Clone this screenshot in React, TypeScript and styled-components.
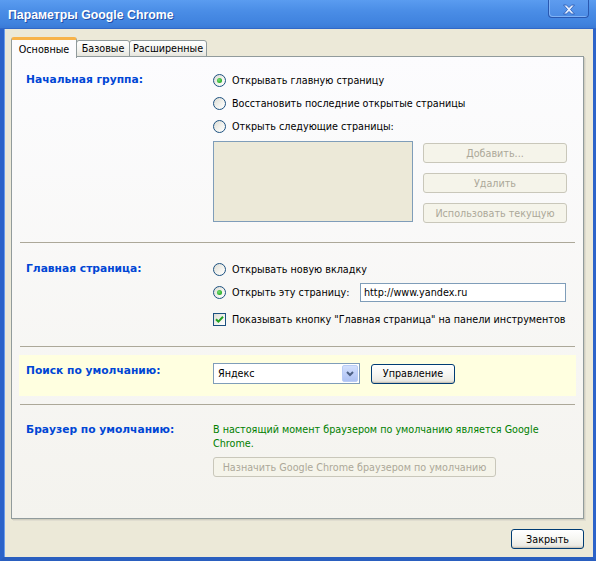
import React from "react"
import styled, { createGlobalStyle } from "styled-components"

const GlobalStyle = createGlobalStyle`
  html, body {
    margin: 0;
    padding: 0;
    background: #ffffff;
  }
  body {
    font-family: "DejaVu Sans Condensed", "Liberation Sans", sans-serif;
    font-size: 10.7px;
    color: #000;
  }
`

const Window = styled.div`
  width: 596px;
  height: 561px;
  box-sizing: border-box;
  display: flex;
  flex-direction: column;
  background: #ece9d8;
  border-left: 4px solid #2c63c9;
  border-right: 3px solid #2c63c9;
  border-bottom: 4px solid #2a5fbf;
  box-shadow: inset 1px 0 0 #6a9cec;
`

const TitleBar = styled.div`
  height: 29px;
  margin: 0 -3px 0 -4px;
  flex: none;
  display: flex;
  align-items: flex-start;
  padding: 0 7px 0 8px;
  box-sizing: border-box;
  background: linear-gradient(180deg, #5a9cf0 0%, #4a8de6 40%, #3f82de 85%, #3a7ad6 100%);
  border-bottom: 1px solid #3068c8;
`

const Title = styled.div`
  flex: 1;
  color: #ffffff;
  font-family: "Liberation Sans", "DejaVu Sans", sans-serif;
  font-weight: bold;
  font-size: 12.3px;
  line-height: 14px;
  text-shadow: 1px 1px 0 #1f4fa8;
  padding-top: 8px;
`

const CloseX = styled.div`
  width: 41px;
  height: 18px;
  box-sizing: border-box;
  border: 1px solid #2a58b0;
  border-top: none;
  border-radius: 0 0 4px 4px;
  background: linear-gradient(180deg, #5e9cef, #4b8be4);
  box-shadow: inset 1px -1px 0 #7fb2f5;
  display: flex;
  align-items: center;
  justify-content: center;
  padding-top: 1px;
`

const Client = styled.div`
  flex: 1;
  display: flex;
  flex-direction: column;
  padding: 8px 9px 0 7px;
`

const Tabs = styled.div`
  display: flex;
  align-items: flex-end;
  height: 20px;
  position: relative;
  z-index: 1;
`

const Tab = styled.div<{ $active?: boolean; $width: number }>`
  box-sizing: border-box;
  width: ${(p) => p.$width}px;
  text-align: center;
  height: ${(p) => (p.$active ? "21px" : "17px")};
  margin-bottom: ${(p) => (p.$active ? "-1px" : "0")};
  padding-top: ${(p) => (p.$active ? "3px" : "1px")};
  background: ${(p) => (p.$active ? "#fcfcfe" : "linear-gradient(180deg, #ffffff 0%, #f3f3ef 60%, #e6e5dd 100%)")};
  border: 1px solid #919b9c;
  border-bottom: ${(p) => (p.$active ? "none" : "1px solid #919b9c")};
  border-top: ${(p) => (p.$active ? "3px solid #f7b34a" : "1px solid #919b9c")};
  border-radius: 3px 3px 0 0;
  margin-left: ${(p) => (p.$active ? "0" : "-1px")};
  white-space: nowrap;
  line-height: 13px;
`

const Panel = styled.div`
  height: 463px;
  box-sizing: border-box;
  margin-top: -1px;
  border: 1px solid #919b9c;
  box-shadow: 1px 1px 0 #d0cebf, 2px 2px 0 #e0ddd0;
  background: linear-gradient(180deg, #fcfcfe 0%, #f4f3ee 100%);
  padding: 0 7px;
`

const Section = styled.div<{ $top: number; $bottom: number; $tint?: boolean }>`
  display: grid;
  grid-template-columns: 187px 1fr;
  padding: ${(p) => `${p.$top}px 0 ${p.$bottom}px 7px`};
  background: ${(p) => (p.$tint ? "#ffffe0" : "transparent")};
`

const Label = styled.div<{ $shift?: number }>`
  color: #0046d5;
  font-family: "DejaVu Sans", "Liberation Sans", sans-serif;
  font-weight: bold;
  line-height: 20px;
  margin-top: ${(p) => p.$shift ?? 0}px;
`

const Options = styled.div`
  display: flex;
  flex-direction: column;
`

const OptionRow = styled.div<{ $gap?: number }>`
  display: flex;
  align-items: center;
  gap: 6px;
  height: 20px;
  margin-top: ${(p) => p.$gap ?? 0}px;
  white-space: nowrap;
`

const RadioCircle = styled.span<{ $checked?: boolean }>`
  position: relative;
  flex: none;
  width: 13px;
  height: 13px;
  box-sizing: border-box;
  border-radius: 50%;
  border: 1px solid #1c5180;
  background: linear-gradient(135deg, #dcdcd4 0%, #f4f4f0 60%, #ffffff 100%);
  &::after {
    content: "";
    display: ${(p) => (p.$checked ? "block" : "none")};
    position: absolute;
    left: 3px;
    top: 3px;
    width: 5px;
    height: 5px;
    border-radius: 50%;
    background: radial-gradient(circle at 40% 40%, #7be07a 0%, #2fb32f 60%, #1f911f 100%);
  }
`

const CheckBox = styled.span`
  flex: none;
  width: 13px;
  height: 13px;
  box-sizing: border-box;
  border: 1px solid #1c5180;
  background: linear-gradient(135deg, #dcdcd4 0%, #f4f4f0 60%, #ffffff 100%);
  display: flex;
  align-items: center;
  justify-content: center;
`

const ListArea = styled.div`
  display: flex;
  gap: 10px;
  margin-top: 5px;
`

const ListBox = styled.div`
  width: 200px;
  height: 81px;
  box-sizing: border-box;
  border: 1px solid #7f9db9;
  background: #ece9d8;
`

const SideButtons = styled.div`
  display: flex;
  flex-direction: column;
  gap: 10px;
  padding-top: 2px;
`

const Button = styled.div<{ $disabled?: boolean; $width: number }>`
  width: ${(p) => p.$width}px;
  height: 20px;
  box-sizing: border-box;
  display: flex;
  align-items: center;
  justify-content: center;
  border-radius: 3px;
  white-space: nowrap;
  border: 1px solid ${(p) => (p.$disabled ? "#c9c7ba" : "#003c74")};
  color: ${(p) => (p.$disabled ? "#aca899" : "#000")};
  background: ${(p) =>
    p.$disabled
      ? "#f5f4ea"
      : "linear-gradient(180deg, #ffffff 0%, #f6f6f2 50%, #ecebe5 85%, #d6d0c5 100%)"};
  box-shadow: ${(p) => (p.$disabled ? "none" : "inset 0 -1px 0 #c9c3b8")};
`

const Separator = styled.div`
  height: 1px;
  background: #aca899;
  margin: 0 1px;
`

const TextInput = styled.div`
  width: 206px;
  height: 19px;
  box-sizing: border-box;
  border: 1px solid #7f9db9;
  background: #fff;
  padding: 0 3px;
  display: flex;
  align-items: center;
  margin-left: auto;
`

const InputRow = styled(OptionRow)`
  width: 353px;
`

const SearchRow = styled.div`
  display: flex;
  align-items: center;
  gap: 11px;
`

const Select = styled.div`
  width: 147px;
  height: 21px;
  box-sizing: border-box;
  border: 1px solid #7f9db9;
  background: #fff;
  display: flex;
  align-items: center;
  padding: 1px;
`

const SelectText = styled.div`
  flex: 1;
  padding-left: 3px;
`

const SelectArrow = styled.div`
  width: 16px;
  height: 17px;
  box-sizing: border-box;
  border: 1px solid #b9ccf5;
  border-radius: 2px;
  background: linear-gradient(180deg, #d3e0fd 0%, #bccdf8 60%, #aec2f3 100%);
  display: flex;
  align-items: center;
  justify-content: center;
`

const GreenText = styled.div`
  color: #008000;
  line-height: 14px;
  padding-top: 3px;
  margin-bottom: 6px;
`

const Tinted = styled.div`
  margin: 8px 0 8px;
`

const Footer = styled.div`
  display: flex;
  justify-content: flex-end;
  padding-top: 10px;
`

const Radio = ({ checked, gap, children }: { checked?: boolean; gap?: number; children: React.ReactNode }) => (
  <OptionRow $gap={gap}>
    <RadioCircle $checked={checked} />
    <span>{children}</span>
  </OptionRow>
)

export default function App() {
  return (
    <>
      <GlobalStyle />
      <Window>
        <TitleBar>
          <Title>Параметры Google Chrome</Title>
          <CloseX>
            <svg width="14" height="11" viewBox="0 0 14 11">
              <path
                d="M1.5 1 L4.5 1 L7 3.5 L9.5 1 L12.5 1 L8.5 5.5 L12.5 10 L9.5 10 L7 7.5 L4.5 10 L1.5 10 L5.5 5.5 Z"
                fill="#e8f0ff"
                stroke="#2d5fb8"
                strokeWidth="0.9"
              />
            </svg>
          </CloseX>
        </TitleBar>
        <Client>
          <Tabs>
            <Tab $active $width={66}>Основные</Tab>
            <Tab $width={54}>Базовые</Tab>
            <Tab $width={78}>Расширенные</Tab>
          </Tabs>
          <Panel>
            <Section $top={13} $bottom={19}>
              <Label>Начальная группа:</Label>
              <div>
                <Options>
                  <Radio checked>Открывать главную страницу</Radio>
                  <Radio gap={3}>Восстановить последние открытые страницы</Radio>
                  <Radio gap={3}>Открыть следующие страницы:</Radio>
                </Options>
                <ListArea>
                  <ListBox />
                  <SideButtons>
                    <Button $disabled $width={144}>Добавить...</Button>
                    <Button $disabled $width={144}>Удалить</Button>
                    <Button $disabled $width={144}>Использовать текущую</Button>
                  </SideButtons>
                </ListArea>
              </div>
            </Section>
            <Separator />
            <Section $top={16} $bottom={17}>
              <Label>Главная страница:</Label>
              <Options>
                <Radio>Открывать новую вкладку</Radio>
                <InputRow $gap={3}>
                  <RadioCircle $checked />
                  <span>Открыть эту страницу:</span>
                  <TextInput>http://www.yandex.ru</TextInput>
                </InputRow>
                <OptionRow $gap={7}>
                  <CheckBox>
                    <svg width="9" height="9" viewBox="0 0 9 9">
                      <path d="M1 4.2 L3.4 6.6 L8 1.8" fill="none" stroke="#21a121" strokeWidth="2" />
                    </svg>
                  </CheckBox>
                  <span>Показывать кнопку "Главная страница" на панели инструментов</span>
                </OptionRow>
              </Options>
            </Section>
            <Separator />
            <Tinted>
              <Section $top={8} $bottom={12} $tint>
                <Label $shift={-2}>Поиск по умолчанию:</Label>
                <SearchRow>
                  <Select>
                    <SelectText>Яндекс</SelectText>
                    <SelectArrow>
                      <svg width="8" height="6" viewBox="0 0 8 6">
                        <path d="M1 1 L4 4 L7 1" fill="none" stroke="#4d6185" strokeWidth="2" />
                      </svg>
                    </SelectArrow>
                  </Select>
                  <Button $width={84}>Управление</Button>
                </SearchRow>
              </Section>
            </Tinted>
            <Separator />
            <Section $top={15} $bottom={0}>
              <Label>Браузер по умолчанию:</Label>
              <div>
                <GreenText>
                  В настоящий момент браузером по умолчанию является Google
                  <br />
                  Chrome.
                </GreenText>
                <Button $disabled $width={283}>Назначить Google Chrome браузером по умолчанию</Button>
              </div>
            </Section>
          </Panel>
          <Footer>
            <Button $width={73}>Закрыть</Button>
          </Footer>
        </Client>
      </Window>
    </>
  )
}
